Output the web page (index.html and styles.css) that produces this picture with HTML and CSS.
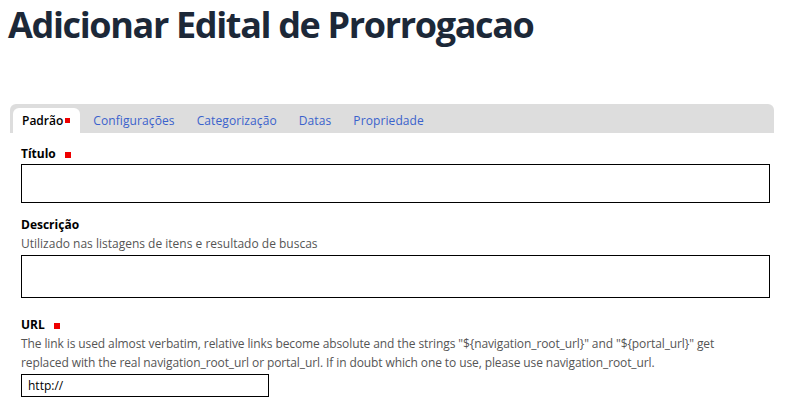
FILE: index.html
```html
<!DOCTYPE html>
<html lang="pt">
<head>
<meta charset="utf-8">
<title>Adicionar Edital de Prorrogacao</title>
<link rel="stylesheet" href="styles.css">
</head>
<body>
<h1 class="title">Adicionar Edital de Prorrogacao</h1>
<form class="form">
  <nav class="tabs">
    <a class="tab active">Padrão<span class="req req-tab"></span></a>
    <a class="tab">Configurações</a>
    <a class="tab">Categorização</a>
    <a class="tab">Datas</a>
    <a class="tab">Propriedade</a>
  </nav>
  <div class="fields">
    <div class="field field-title">
      <label class="label">Título <span class="req"></span></label>
      <input class="text-input big" type="text">
    </div>
    <div class="field field-desc">
      <label class="label">Descrição</label>
      <div class="help">Utilizado nas listagens de itens e resultado de buscas</div>
      <textarea class="text-input area"></textarea>
    </div>
    <div class="field field-url">
      <label class="label">URL <span class="req"></span></label>
      <div class="help help-url">The link is used almost verbatim, relative links become absolute and the strings "${navigation_root_url}" and "${portal_url}" get replaced with the real navigation_root_url or portal_url. If in doubt which one to use, please use navigation_root_url.</div>
      <input class="text-input small" type="text" value="http://">
    </div>
  </div>
</form>
</body>
</html>
```
FILE: styles.css
```css
html, body {
  margin: 0;
  padding: 0;
  background: #fff;
}
body {
  font-family: "Open Sans", "DejaVu Sans", sans-serif;
  color: #000;
  padding: 0 8px;
}
.title {
  margin: 0;
  padding-top: 2px;
  font-size: 36px;
  line-height: 46px;
  font-weight: 700;
  color: #1c2838;
  letter-spacing: -1.35px;
}
.form {
  margin: 56px 3px 0 2px;
}
.tabs {
  display: flex;
  background: #dddddd;
  border-radius: 6px 6px 0 0;
  height: 29px;
  padding: 4px 3px 0;
  box-sizing: border-box;
  font-size: 12px;
}
.tab {
  display: flex;
  align-items: center;
  height: 25px;
  padding: 0 11px;
  color: #3a62cc;
  letter-spacing: 0.1px;
  border-radius: 6px 6px 0 0;
  cursor: pointer;
}
.tab.active {
  background: #fff;
  color: #000;
  font-weight: 600;
  letter-spacing: 0;
  padding: 0 10px 0 9px;
  margin-right: 2px;
}
.req {
  display: inline-block;
  width: 6px;
  height: 6px;
  background: #ee0000;
  margin-left: 6px;
  vertical-align: 0;
}
.req-tab {
  margin-left: 2px;
  width: 5px;
  height: 5px;
  vertical-align: 1px;
}
.fields {
  padding: 0 4px 0 11px;
}
.field-title {
  margin-top: 12px;
}
.field-desc {
  margin-top: 13px;
}
.field-url {
  margin-top: 18px;
}
.label {
  display: block;
  font-size: 12px;
  font-weight: 700;
  line-height: 18px;
}
.help {
  font-size: 12px;
  line-height: 19px;
  color: #555;
}
.help-url {
  letter-spacing: -0.1px;
  margin-right: 24px;
}
.text-input {
  display: block;
  box-sizing: border-box;
  border: 1px solid #000;
  margin: 0;
  padding: 2px 6px;
  font-family: "Open Sans", "DejaVu Sans", sans-serif;
  font-size: 12px;
  background: #fff;
  resize: none;
}
.big {
  width: 100%;
  height: 39px;
  margin-top: 1px;
}
.area {
  width: 100%;
  height: 43px;
  margin-top: 2px;
}
.small {
  width: 248px;
  height: 23px;
  margin-top: 2px;
}
```
